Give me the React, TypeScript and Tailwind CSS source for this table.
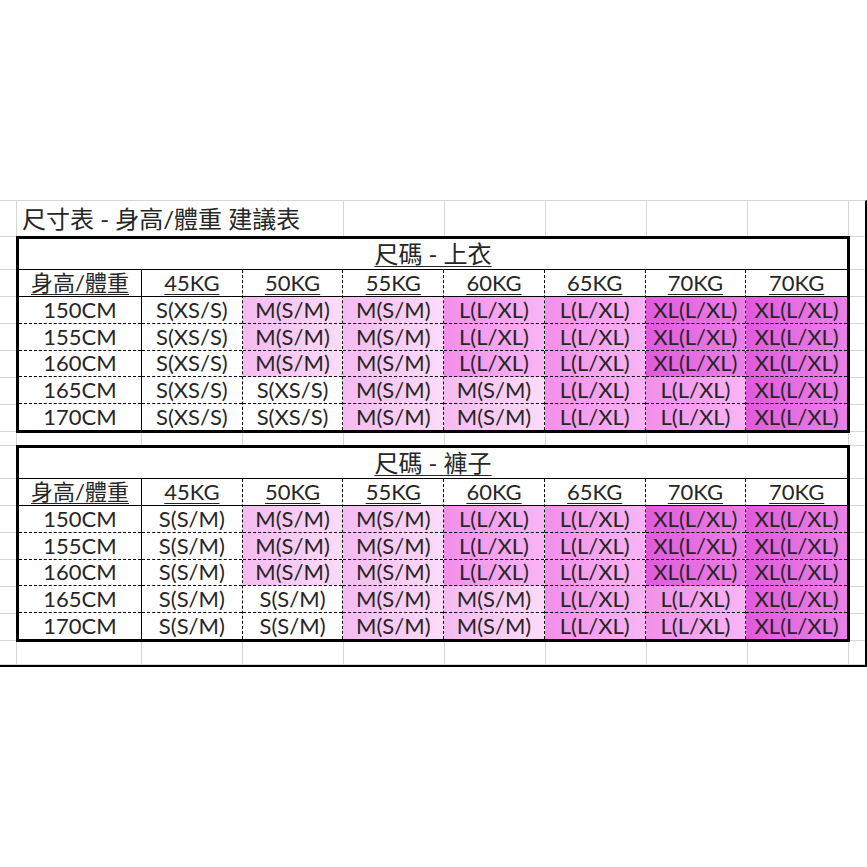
import React from "react";

type Sz = "S" | "M" | "L" | "XL";

const FILLS: Record<Sz, string> = {
  S: "bg-white",
  M: "bg-linear-to-r from-[#f5bbf1] to-[#fcdbf9]",
  L: "bg-linear-to-r from-[#f28fea] to-[#f9b5f5]",
  XL: "bg-linear-to-r from-[#e05adc] to-[#eb80e7]",
};

const HEIGHTS = ["150CM", "155CM", "160CM", "165CM", "170CM"];
const WEIGHTS = ["45KG", "50KG", "55KG", "60KG", "65KG", "70KG", "70KG"];

const ROWS: Sz[][] = [
  ["S", "M", "M", "L", "L", "XL", "XL"],
  ["S", "M", "M", "L", "L", "XL", "XL"],
  ["S", "M", "M", "L", "L", "XL", "XL"],
  ["S", "S", "M", "M", "L", "L", "XL"],
  ["S", "S", "M", "M", "L", "L", "XL"],
];

function label(s: Sz, small: string) {
  if (s === "S") return small;
  if (s === "M") return "M(S/M)";
  if (s === "L") return "L(L/XL)";
  return "XL(L/XL)";
}

function SizeTable({ title, small, place }: { title: string; small: string; place: string }) {
  return (
    <div className={`${place} -mx-px -my-px border-[3px] border-black bg-white flex flex-col`}>
      <div className="h-[31px] shrink-0 border-b border-black flex items-center justify-center text-[24px] leading-none underline underline-offset-[3px] decoration-1">
        {title}
      </div>
      <div className="flex-1 grid grid-cols-[123px_repeat(7,1fr)]">
        <div className="flex flex-col border-r border-black">
          <div className="h-[27px] shrink-0 border-b border-black flex items-center justify-center text-[22px] leading-none underline underline-offset-[3px] decoration-1">
            身高/體重
          </div>
          {HEIGHTS.map((h, i) => (
            <div
              key={h}
              className={
                i < 4
                  ? "flex-1 flex items-center justify-center text-[22px] leading-none border-b border-dashed border-black"
                  : "flex-1 flex items-center justify-center text-[22px] leading-none"
              }
            >
              {h}
            </div>
          ))}
        </div>
        {WEIGHTS.map((w, j) => (
          <div
            key={j}
            className={j < 6 ? "flex flex-col border-r border-dashed border-black" : "flex flex-col"}
          >
            <div className="h-[27px] shrink-0 border-b border-solid border-black flex items-center justify-center text-[22px] leading-none underline underline-offset-[3px] decoration-1">
              {w}
            </div>
            {ROWS.map((row, i) => (
              <div
                key={i}
                className={`${FILLS[row[j]]} ${
                  i < 4
                    ? "flex-1 flex items-center justify-center text-[22px] leading-none border-b border-dashed border-black"
                    : "flex-1 flex items-center justify-center text-[22px] leading-none"
                }`}
              >
                {label(row[j], small)}
              </div>
            ))}
          </div>
        ))}
      </div>
    </div>
  );
}

export default function App() {
  const empties: { r: number; c: number }[] = [];
  for (let r = 1; r <= 17; r++) {
    for (let c = 1; c <= 10; c++) {
      if (r === 1 && c >= 2 && c <= 4) continue;
      if (r >= 2 && r <= 8 && c >= 2 && c <= 9) continue;
      if (r >= 10 && r <= 16 && c >= 2 && c <= 9) continue;
      empties.push({ r, c });
    }
  }
  return (
    <div className="w-[867px] h-[867px] bg-white pt-[200px] text-[#262626] font-['Lato','Noto_Sans_CJK_TC',sans-serif]">
      <div className="grid grid-cols-[17px_125px_repeat(7,101px)_1fr] grid-rows-[36px_33px_repeat(6,27px)_14px_33px_repeat(6,27px)_24px] border-t border-t-[#d6d6d6] border-r-2 border-r-black border-b-2 border-b-black">
        {empties.map(({ r, c }) => (
          <div
            key={`${r}-${c}`}
            className={c === 10 ? "border-b border-[#d6d6d6]" : "border-r border-b border-[#d6d6d6]"}
          />
        ))}
        <div className="row-start-1 col-start-2 col-span-3 border-r border-b border-[#d6d6d6] flex items-center pl-[5px] text-[24px] leading-none whitespace-nowrap">
          尺寸表 - 身高/體重 建議表
        </div>
        <SizeTable title="尺碼 - 上衣" small="S(XS/S)" place="col-start-2 col-span-8 row-start-2 row-span-7" />
        <SizeTable title="尺碼 - 褲子" small="S(S/M)" place="col-start-2 col-span-8 row-start-10 row-span-7" />
      </div>
    </div>
  );
}
